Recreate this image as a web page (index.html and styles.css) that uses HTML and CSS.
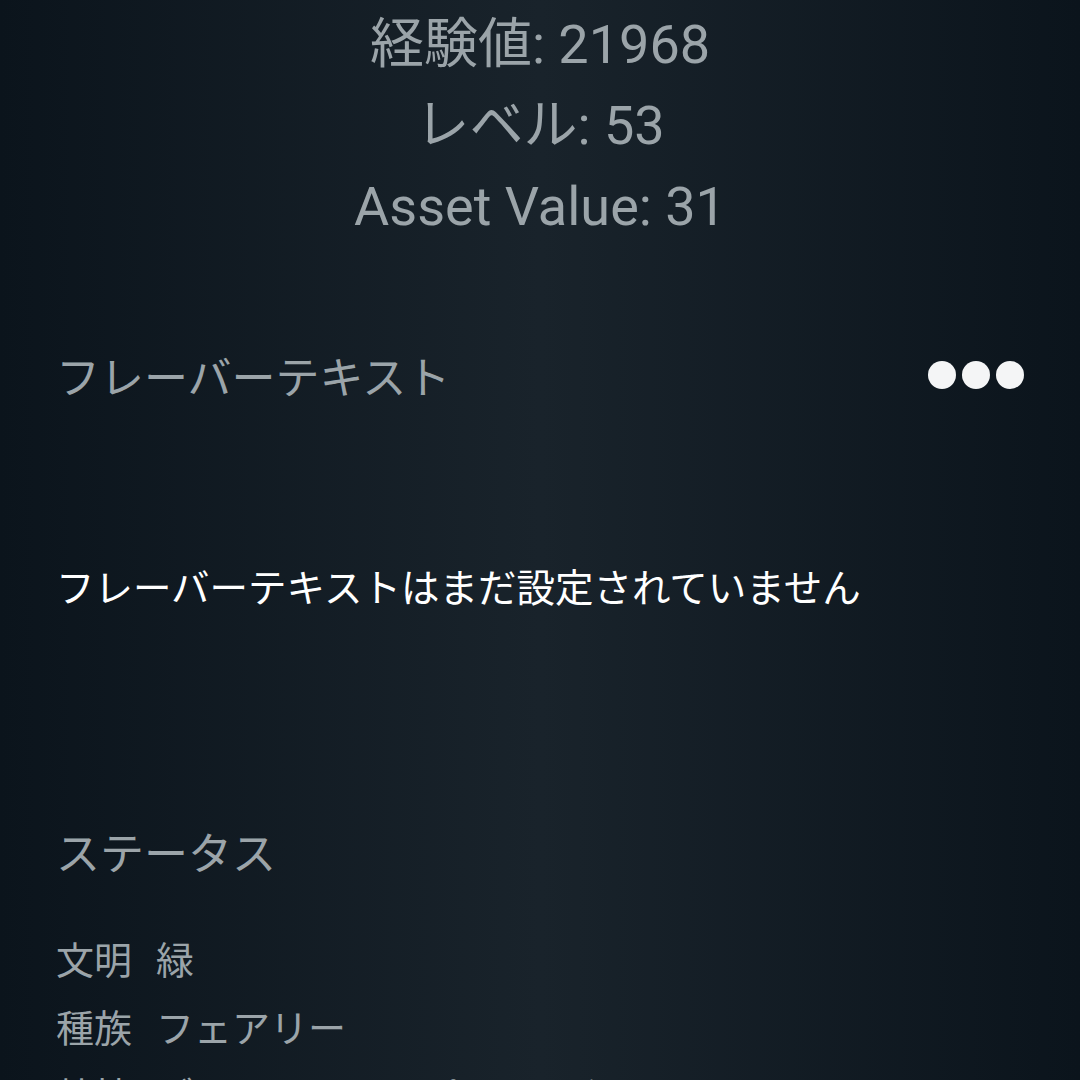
FILE: index.html
```html
<!DOCTYPE html>
<html lang="ja">
<head>
    <meta charset="UTF-8">
    <meta name="viewport" content="width=device-width, initial-scale=1.0">
    <title>カード詳細</title>
    <link rel="stylesheet" href="styles.css">
</head>
<body>
    <!-- Card stats -->
    <div class="stats">
        <p>経験値: 21968</p>
        <p>レベル: 53</p>
        <p>Asset Value: 31</p>
    </div>

    <!-- Flavor text -->
    <div class="section-head">
        <h2>フレーバーテキスト</h2>
        <div class="more-btn">
            <span></span><span></span><span></span>
        </div>
    </div>
    <p class="flavor">フレーバーテキストはまだ設定されていません</p>

    <!-- Status -->
    <h2 class="status-title">ステータス</h2>
    <ul class="status-list">
        <li><span class="key">文明</span><span>緑</span></li>
        <li><span class="key">種族</span><span>フェアリー</span></li>
        <li><span class="key">特技</span><span>ブロッカー・スピードアタッカー</span></li>
    </ul>
</body>
</html>
```

FILE: styles.css
```css
* {
    box-sizing: border-box;
    margin: 0;
    padding: 0;
}

html, body {
    height: 100%;
    overflow: hidden;
}

body {
    font-family: Roboto, "Noto Sans CJK JP", sans-serif;
    background: linear-gradient(to right, #0b141c 0%, #19232b 50%, #0b141c 100%);
    color: #9ba4a9;
    padding: 0 56px;
}

/* Stats */
.stats {
    text-align: center;
    font-size: 54px;
    line-height: 81px;
    padding-top: 4px;
}

/* Section header */
.section-head {
    display: flex;
    justify-content: space-between;
    align-items: center;
    margin-top: 96px;
}

h2 {
    font-weight: normal;
    font-size: 44px;
    color: #9ba4a9;
}

.more-btn {
    display: flex;
    gap: 6px;
}

.more-btn span {
    width: 28px;
    height: 28px;
    border-radius: 50%;
    background-color: #f4f5f6;
}

.flavor {
    color: #fff;
    font-size: 38.5px;
    margin-top: 150px;
}

.status-title {
    margin-top: 206px;
}

.status-list {
    list-style: none;
    margin-top: 47px;
    font-size: 38px;
}

.status-list li {
    height: 68px;
    display: flex;
    gap: 24px;
}
```
